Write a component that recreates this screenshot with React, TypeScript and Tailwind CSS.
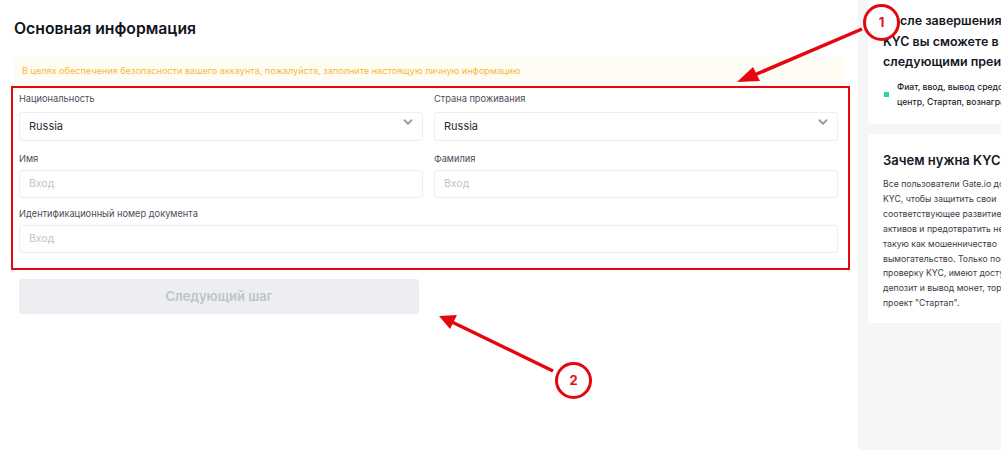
import React from "react";
import { ChevronDown } from "lucide-react";

const font = { fontFamily: '"Inter", "Noto Sans", sans-serif' };

function Label({ children }: { children: React.ReactNode }) {
  return <div className="h-[12px] text-[9.25px] leading-[12px] text-[#4b4f5a]">{children}</div>;
}

function SelectBox() {
  return (
    <div className="h-[29px] border border-[#eceef1] rounded-[3px] flex items-start justify-between pl-[9px] pr-[7px] bg-white">
      <span className="text-[11px] leading-[27px] text-[#2a2d36]">Russia</span>
      <ChevronDown size={14} strokeWidth={3.4} className="mt-[2px] text-[#9a9ea8]" />
    </div>
  );
}

function InputBox() {
  return (
    <div className="h-[28px] border border-[#eceef1] rounded-[3px] flex items-center pl-[9px] bg-white">
      <span className="text-[10.5px] text-[#c0c3ca]">Вход</span>
    </div>
  );
}

function Badge({ n, className }: { n: string; className: string }) {
  return (
    <div className={`absolute w-[37px] h-[37px] rounded-full border-[3.5px] border-[#e5070f] bg-white flex items-center justify-center text-[13px] font-bold text-[#d8141a] ${className}`}>
      {n}
    </div>
  );
}

export default function App() {
  return (
    <div className="relative w-[1001px] h-[450px] overflow-hidden bg-white flex" style={font}>
      <main className="w-[858px] shrink-0 pt-[19px]">
        <h1 className="ml-[14px] h-[20px] text-[15.75px] leading-[20px] font-semibold text-[#11141c]">Основная информация</h1>
        <div className="ml-[14px] mt-[18px] w-[829px] h-[29px] bg-[#fffdf3] pl-[8px] text-[9.12px] leading-[28px] text-[#f6b73c]">
          В целях обеспечения безопасности вашего аккаунта, пожалуйста, заполните настоящую личную информацию
        </div>
        <form className="ml-[11px] w-[839px] h-[184px] border-2 border-[#e5070f] pt-[5px] pl-[6px] pr-[10px]">
          <div className="grid grid-cols-[404px_404px] gap-x-[11px]">
            <div>
              <Label>Национальность</Label>
              <div className="mt-[7px]"><SelectBox /></div>
            </div>
            <div>
              <Label>Страна проживания</Label>
              <div className="mt-[7px]"><SelectBox /></div>
            </div>
            <div className="mt-[12px]">
              <Label>Имя</Label>
              <div className="mt-[5px]"><InputBox /></div>
            </div>
            <div className="mt-[12px]">
              <Label>Фамилия</Label>
              <div className="mt-[5px]"><InputBox /></div>
            </div>
            <div className="col-span-2 mt-[10px]">
              <Label>Идентификационный номер документа</Label>
              <div className="mt-[5px]"><InputBox /></div>
            </div>
          </div>
        </form>
        <button className="block ml-[19px] mt-[9px] w-[400px] h-[35px] rounded-[3px] bg-[#eceef1] text-[13px] font-semibold text-[#bfc3cc]">
          Следующий шаг
        </button>
      </main>
      <aside className="flex-1 bg-[#f5f6f7] pl-[10px] flex flex-col gap-[10px]">
        <section className="h-[124px] bg-white rounded-bl-[4px] pl-[15px] pt-[11px] overflow-hidden whitespace-nowrap">
          <div className="text-[12.5px] leading-[20.5px] font-semibold text-[#14171f]">
            <div>После завершения</div>
            <div>KYC вы сможете в</div>
            <div>следующими преи</div>
          </div>
          <div className="mt-[7px] flex items-center gap-[8px] pl-px">
            <span className="w-[5px] h-[5px] bg-[#2fd69a] shrink-0" />
            <div className="text-[8.6px] leading-[15px] font-medium text-[#23262f]">
              <div>Фиат, ввод, вывод средств</div>
              <div>центр, Стартап, вознаграждения</div>
            </div>
          </div>
        </section>
        <section className="h-[189px] bg-white rounded-l-[4px] pl-[15px] pt-[17px] overflow-hidden whitespace-nowrap">
          <h2 className="text-[13px] leading-[18px] font-semibold text-[#14171f]">Зачем нужна KYC</h2>
          <div className="mt-[8px] text-[8.7px] leading-[14.9px] text-[#3a3d47]">
            <div>Все пользователи Gate.io должны</div>
            <div>KYC, чтобы защитить свои</div>
            <div>соответствующее развитие</div>
            <div>активов и предотвратить незаконную</div>
            <div>такую как мошенничество</div>
            <div>вымогательство. Только после</div>
            <div>проверку KYC, имеют доступ</div>
            <div>депозит и вывод монет, торговлю</div>
            <div>проект "Стартап".</div>
          </div>
        </section>
      </aside>

      <svg className="absolute inset-0 pointer-events-none" width="1001" height="450" viewBox="0 0 1001 450">
        <line x1="862" y1="29" x2="752" y2="76" stroke="#e5070f" strokeWidth="3.5" />
        <polygon points="737,82 753,67 760,81" fill="#e5070f" />
        <line x1="553" y1="371" x2="452" y2="322" stroke="#e5070f" strokeWidth="3.5" />
        <polygon points="439,316 457,315 450,329" fill="#e5070f" />
      </svg>
      <Badge n="1" className="left-[863px] top-[4px]" />
      <Badge n="2" className="left-[555px] top-[362px]" />
    </div>
  );
}
